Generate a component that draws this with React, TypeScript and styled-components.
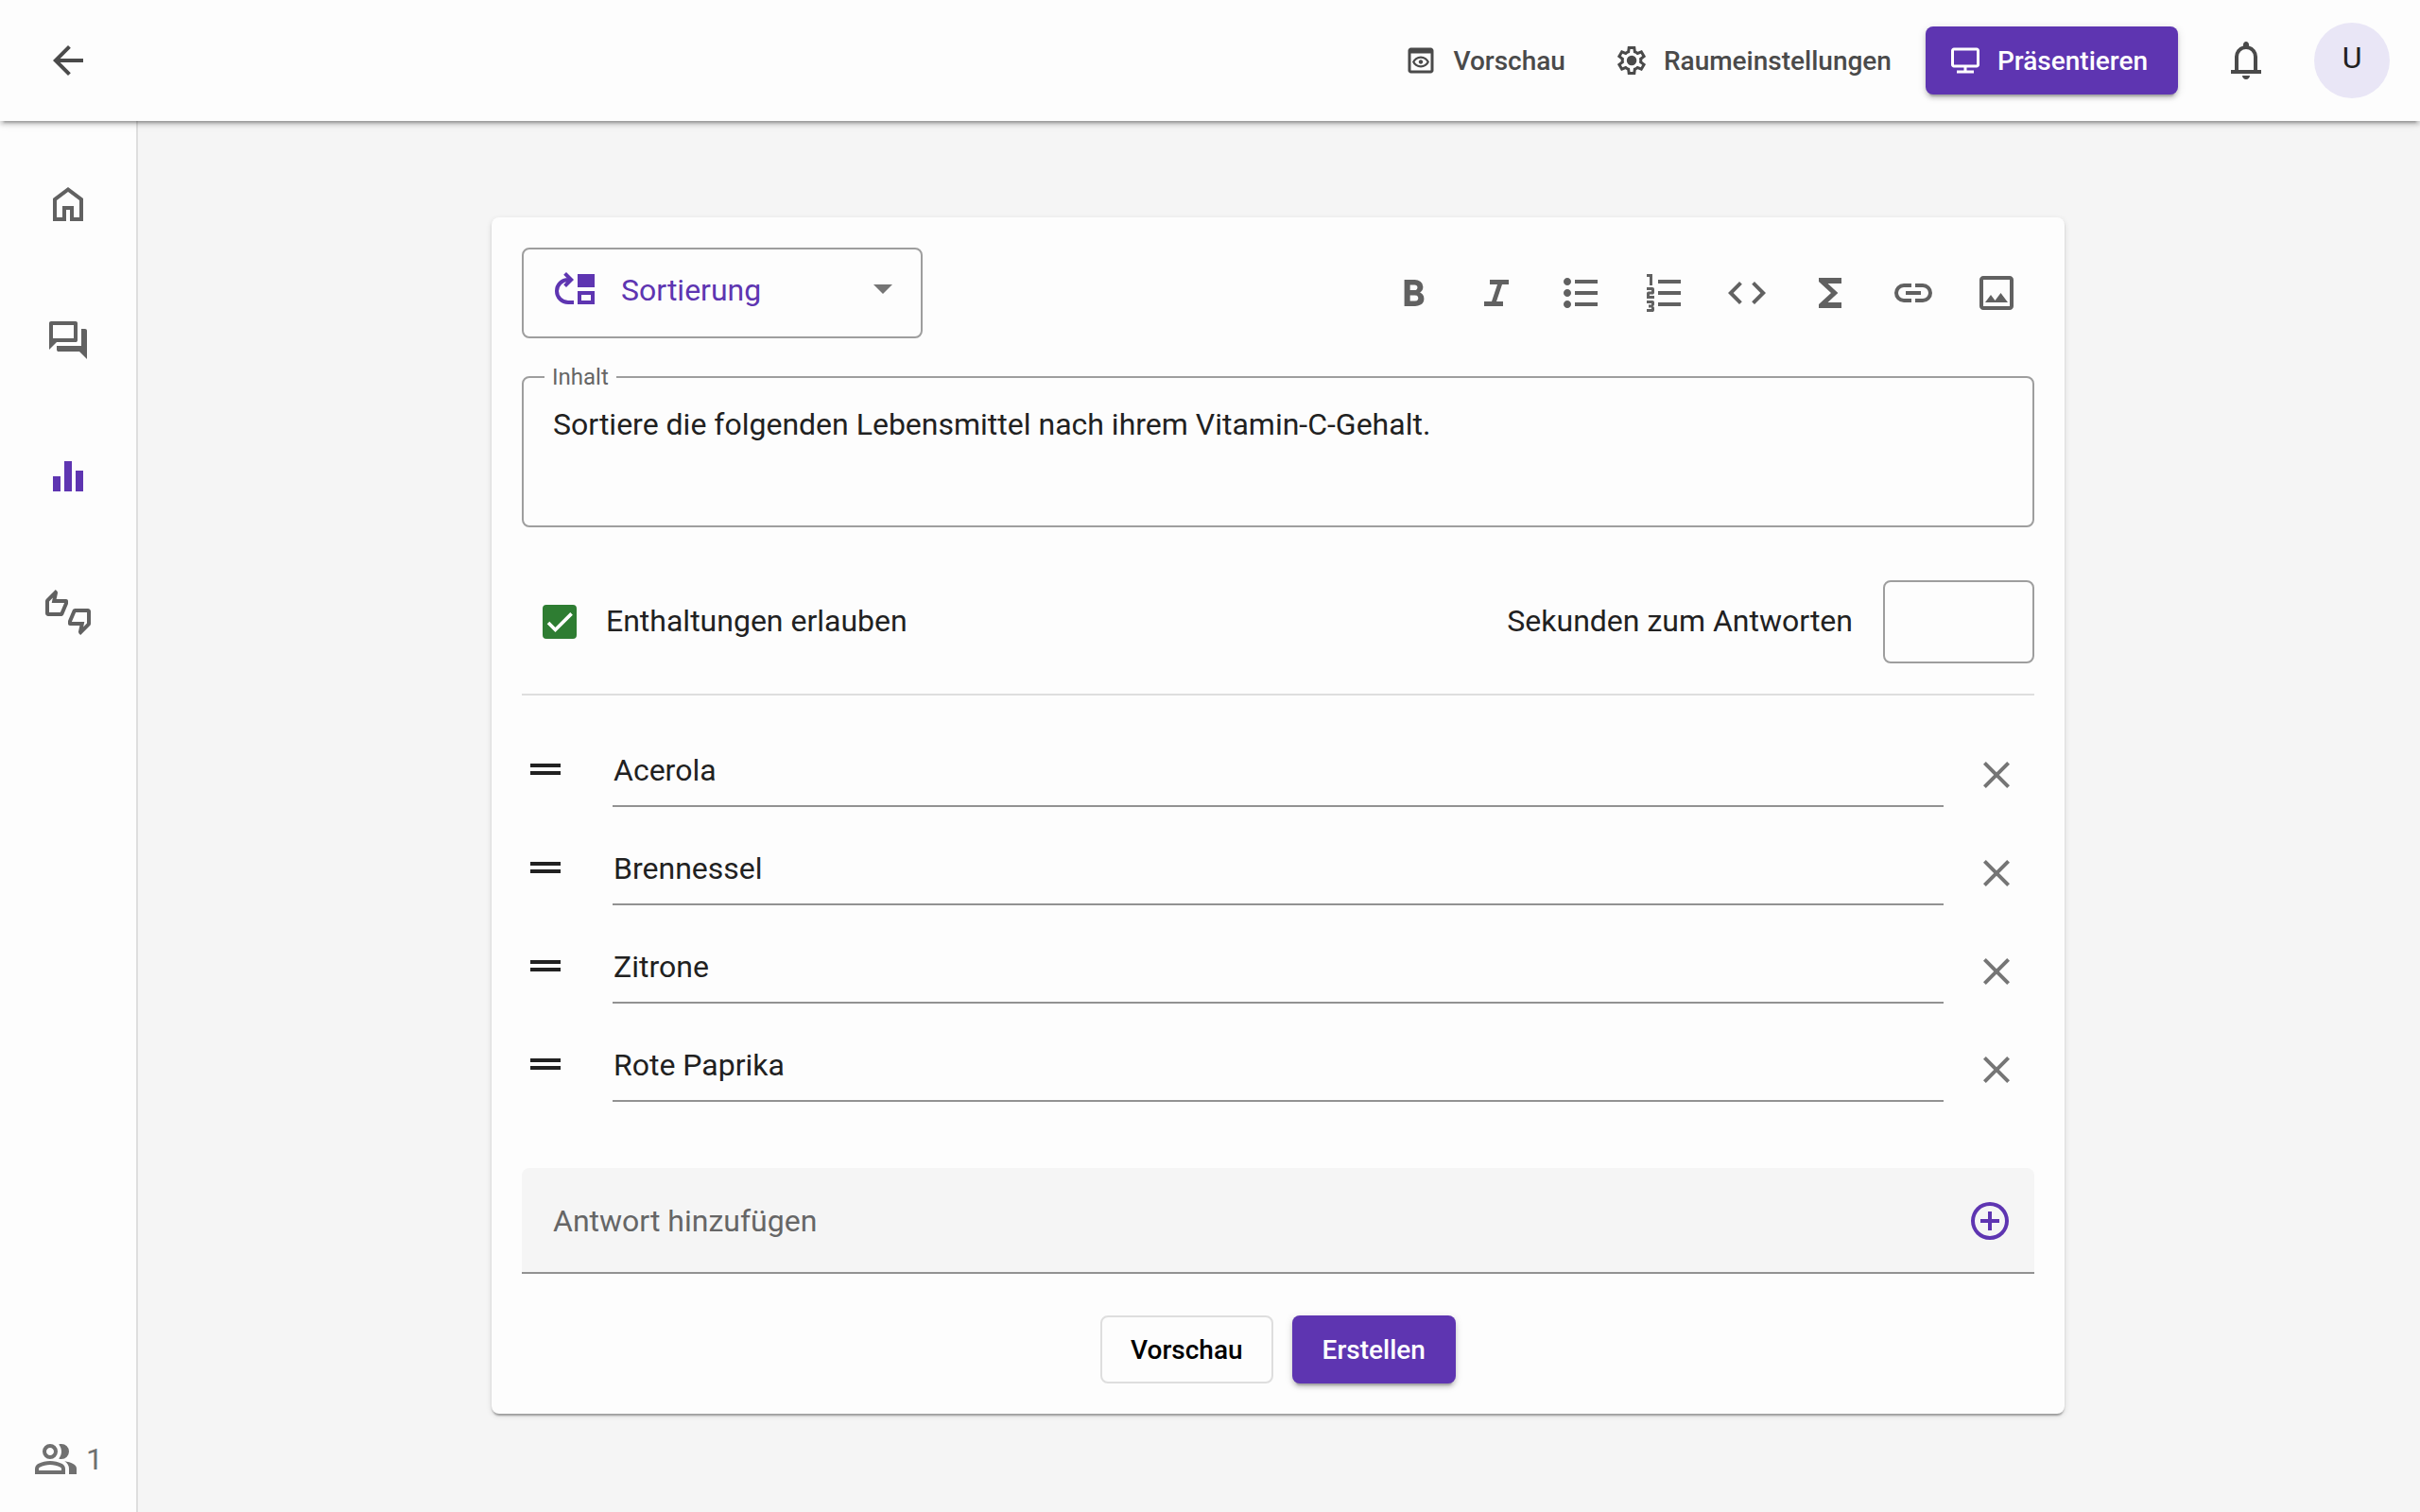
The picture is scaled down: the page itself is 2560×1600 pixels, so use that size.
import React, { useState } from 'react';
import styled, { createGlobalStyle } from 'styled-components';

const color = {
  primary: '#5e35b1',
  surface: '#fdfdfd',
  page: '#f5f5f5',
  text: '#212121',
  header: '#4a4a4a',
  icon: '#616161',
  hint: '#666666',
  close: '#757575',
  outline: '#9e9e9e',
  underline: '#929292',
  divider: '#dedede',
  success: '#2e7d32',
  avatar: '#e9e6f6',
};

const raised =
  '0 6px 2px -4px rgba(0,0,0,.2), 0 4px 4px 0 rgba(0,0,0,.14), 0 2px 10px 0 rgba(0,0,0,.12)';

const paths = {
  back: 'm313-440 224 224-57 56-320-320 320-320 57 56-224 224h487v80H313Z',
  preview:
    'M200-120q-33 0-56.5-23.5T120-200v-560q0-33 23.5-56.5T200-840h560q33 0 56.5 23.5T840-760v560q0 33-23.5 56.5T760-120H200Zm0-80h560v-480H200v480Zm280-80q-82 0-146.5-44.5T240-440q29-71 93.5-115.5T480-600q82 0 146.5 44.5T720-440q-29 71-93.5 115.5T480-280Zm0-60q56 0 102-26.5t72-73.5q-26-47-72-73.5T480-540q-56 0-102 26.5T306-440q26 47 72 73.5T480-340Zm0-40q25 0 42.5-17.5T540-440q0-25-17.5-42.5T480-500q-25 0-42.5 17.5T420-440q0 25 17.5 42.5T480-380Z',
  settings:
    'm370-80-16-128q-13-5-24.5-12T307-235l-119 50L78-375l103-78q-1-7-1-13.5v-27q0-6.5 1-13.5L78-585l110-190 119 50q11-8 23-15t24-12l16-128h220l16 128q13 5 24.5 12t22.5 15l119-50 110 190-103 78q1 7 1 13.5v27q0 6.5-2 13.5l103 78-110 190-118-50q-11 8-23 15t-24 12L590-80H370Zm70-80h79l14-106q31-8 57.5-23.5T639-327l99 41 39-68-86-65q5-14 7-29.5t2-31.5q0-16-2-31.5t-7-29.5l86-65-39-68-99 42q-22-23-48.5-38.5T533-694l-13-106h-79l-14 106q-31 8-57.5 23.5T321-633l-99-41-39 68 86 64q-5 15-7 30t-2 32q0 16 2 31t7 30l-86 65 39 68 99-42q22 23 48.5 38.5T427-266l13 106Zm42-180q58 0 99-41t41-99q0-58-41-99t-99-41q-59 0-99.5 41T342-480q0 58 40.5 99t99.5 41Z',
  present:
    'M240-120v-80h200v-80H160q-33 0-56.500-23.500T80-360v-400q0-33 23.500-56.500T160-840h640q33 0 56.500 23.500T880-760v400q0 33-23.500 56.500T800-280H520v80h200v80H240Zm-80-240h640v-400H160v400Z',
  bell: 'M160-200v-80h80v-280q0-83 50-147.500T420-792v-28q0-25 17.500-42.500T480-880q25 0 42.500 17.500T540-820v28q80 20 130 84.500T720-560v280h80v80H160Zm320 120q-33 0-56.500-23.500T400-160h160q0 33-23.500 56.500T480-80ZM320-280h320v-280q0-66-47-113t-113-47q-66 0-113 47t-47 113v280Z',
  home: 'M240-200h120v-240h240v240h120v-360L480-740 240-560v360Zm-80 80v-480l320-240 320 240v480H520v-240h-80v240H160Z',
  forum:
    'M280-240q-17 0-28.500-11.500T240-280v-80h520v-360h80q17 0 28.500 11.500T880-680v600L720-240H280ZM80-280v-560q0-17 11.500-28.500T120-880h520q17 0 28.500 11.500T680-840v360q0 17-11.500 28.500T640-440H240L80-280Zm520-240v-280H160v280h440Z',
  chart: 'M160-160v-320h160v320H160Zm240 0v-640h160v640H400Zm240 0v-440h160v440H640Z',
  group:
    'M40-160v-112q0-34 17.500-62.500T104-378q62-31 126-46.500T360-440q66 0 130 15.500T616-378q29 15 46.500 43.500T680-272v112H40Zm720 0v-120q0-44-24.500-84.500T666-434q51 6 96 20.500t84 35.500q36 20 55 44.500t19 53.500v120H760ZM360-480q-66 0-113-47t-47-113q0-66 47-113t113-47q66 0 113 47t47 113q0 66-47 113t-113 47Zm400-160q0 66-47 113t-113 47q-11 0-28-2.500t-28-5.500q27-32 41.500-71t14.500-81q0-42-14.500-81T544-792q14-5 28-6.500t28-1.500q66 0 113 47t47 113ZM120-240h480v-32q0-11-5.500-20T580-306q-54-27-109-40.500T360-360q-56 0-111 13.500T140-306q-9 5-14.500 14t-5.500 20v32Zm240-320q33 0 56.500-23.500T440-640q0-33-23.500-56.500T360-720q-33 0-56.500 23.500T280-640q0 33 23.500 56.500T360-560Z',
  bold: 'M272-200v-560h221q65 0 120 40t55 111q0 51-23 78.500T602-491q25 11 55.500 41t30.500 90q0 89-65 124.500T501-200H272Zm121-112h104q48 0 58.500-24.500T566-372q0-11-10.500-35.500T494-432H393v120Zm0-228h93q33 0 48-17t15-38q0-24-17-39t-44-15h-95v109Z',
  italic: 'M200-200v-100h160l120-360H320v-100h400v100H580L460-300h140v100H200Z',
  bullets:
    'M360-200v-80h480v80H360Zm0-240v-80h480v80H360Zm0-240v-80h480v80H360ZM200-160q-33 0-56.500-23.500T120-240q0-33 23.500-56.500T200-320q33 0 56.500 23.500T280-240q0 33-23.500 56.500T200-160Zm0-240q-33 0-56.500-23.500T120-480q0-33 23.500-56.500T200-560q33 0 56.500 23.500T280-480q0 33-23.500 56.500T200-400Zm0-240q-33 0-56.500-23.500T120-720q0-33 23.500-56.500T200-800q33 0 56.500 23.500T280-720q0 33-23.500 56.500T200-640Z',
  numbers:
    'M120-80v-60h100v-30h-60v-60h60v-30H120v-60h120q17 0 28.500 11.500T280-280v40q0 17-11.500 28.500T240-200q17 0 28.500 11.500T280-160v40q0 17-11.500 28.500T240-80H120Zm0-280v-110q0-17 11.500-28.500T160-510h60v-30H120v-60h120q17 0 28.500 11.500T280-560v70q0 17-11.500 28.500T240-450h-60v30h100v60H120Zm60-280v-180h-60v-60h120v240h-60Zm180 440v-80h480v80H360Zm0-240v-80h480v80H360Zm0-240v-80h480v80H360Z',
  code: 'M320-240 80-480l240-240 57 57-184 184 183 183-56 56Zm320 0-57-57 184-184-183-183 56-56 240 240-240 240Z',
  formula: 'M240-160v-80l260-240-260-240v-80h480v120H431l215 200-215 200h289v120H240Z',
  link: 'M440-280H280q-83 0-141.500-58.500T80-480q0-83 58.500-141.500T280-680h160v80H280q-50 0-85 35t-35 85q0 50 35 85t85 35h160v80ZM320-440v-80h320v80H320Zm200 160v-80h160q50 0 85-35t35-85q0-50-35-85t-85-35H520v-80h160q83 0 141.500 58.500T880-480q0 83-58.500 141.500T680-280H520Z',
  image:
    'M200-120q-33 0-56.500-23.500T120-200v-560q0-33 23.500-56.500T200-840h560q33 0 56.500 23.500T840-760v560q0 33-23.500 56.500T760-120H200Zm0-80h560v-560H200v560Zm40-80h480L570-480 450-320l-90-120-120 160Z',
  handle: 'M160-360v-80h640v80H160Zm0-160v-80h640v80H160Z',
  close:
    'm256-200-56-56 224-224-224-224 56-56 224 224 224-224 56 56-224 224 224 224-56 56-224-224-224 224Z',
  add: 'M440-280h80v-160h160v-80H520v-160h-80v160H280v80h160v160Zm40 200q-83 0-156-31.500T197-197q-54-54-85.500-127T80-480q0-83 31.500-156T197-763q54-54 127-85.500T480-880q83 0 156 31.500T763-763q54 54 85.500 127T880-480q0 83-31.500 156T763-197q-54 54-127 85.500T480-80Zm0-80q134 0 227-93t93-227q0-134-93-227t-227-93q-134 0-227 93t-93 227q0 134 93 227t227 93Z',
};

const thumbs =
  'M12 6c0-.55-.45-1-1-1H5.820l.66-3.180.02-.23c0-.31-.13-.59-.33-.8L5.380 0 .44 4.940C.17 5.210 0 5.590 0 6v6.500c0 .83.67 1.500 1.500 1.500h6.750c.62 0 1.150-.38 1.380-.91l2.260-5.290c.07-.17.11-.36.11-.55V6zm-2 1.130L7.920 12H2V6.210l1.930-1.930L3.360 7H10v.13zM22.500 10h-6.750c-.62 0-1.150.38-1.380.91l-2.260 5.290c-.07.17-.11.36-.11.55V18c0 .55.45 1 1 1h5.180l-.66 3.180-.02.24c0 .31.13.59.33.8l.79.78 4.940-4.940c.27-.27.44-.65.44-1.060v-6.500c0-.83-.67-1.500-1.500-1.500zm-.5 7.790l-1.930 1.930.57-2.720H14v-.13L16.080 12H22v5.790z';

const moveUp =
  'M11 18v2H8A7 7 0 0 1 8 6h-.8L5.600 4.400 7 3l4 4-4 4-1.400-1.400L7.200 8H8a5 5 0 0 0 0 10zM13 4h9v7h-9zM13 13v7h9v-7zm7 5h-5v-3h5z';

const Global = createGlobalStyle`
  *, *::before, *::after { box-sizing: border-box; }
  body {
    margin: 0;
    background: ${color.page};
    color: ${color.text};
    font: 400 32px/48px Roboto, "Open Sans", sans-serif;
  }
  button, input, select, textarea {
    margin: 0;
    padding: 0;
    border: 0;
    background: none;
    color: inherit;
    font: inherit;
    outline: none;
  }
  button, select { cursor: pointer; }
`;

const Svg = styled.svg<{ $size: number }>`
  display: block;
  flex: none;
  width: ${(p) => p.$size}px;
  height: ${(p) => p.$size}px;
  fill: currentColor;
`;

const Icon = ({ name, size = 48 }: { name: keyof typeof paths; size?: number }) => (
  <Svg $size={size} viewBox="0 -960 960 960" aria-hidden="true">
    <path d={paths[name]} />
  </Svg>
);

const Icon24 = ({ d }: { d: string }) => (
  <Svg $size={48} viewBox="0 0 24 24" aria-hidden="true">
    <path d={d} />
  </Svg>
);

const Page = styled.div`
  display: flex;
  flex-direction: column;
  min-height: 100vh;
`;

const Header = styled.header`
  position: relative;
  z-index: 2;
  display: flex;
  align-items: center;
  justify-content: space-between;
  height: 128px;
  padding: 0 32px;
  background: ${color.surface};
  color: ${color.header};
  box-shadow: ${raised};
`;

const HeaderActions = styled.div`
  display: flex;
  align-items: center;
  gap: 32px;
`;

const HeaderNav = styled.div`
  display: flex;
  align-items: center;
  gap: 4px;
`;

const IconButton = styled.button<{ $color?: string }>`
  display: grid;
  place-items: center;
  flex: none;
  width: 80px;
  height: 80px;
  color: ${(p) => p.$color ?? 'inherit'};
`;

const Button = styled.button<{ $kind: 'text' | 'outlined' | 'filled' }>`
  display: flex;
  align-items: center;
  justify-content: center;
  gap: 16px;
  height: 72px;
  padding: 0 ${(p) => (p.$kind === 'text' ? 24 : p.$kind === 'outlined' ? 30 : 32)}px;
  border: ${(p) => (p.$kind === 'outlined' ? `2px solid ${color.divider}` : '0')};
  border-radius: 8px;
  background: ${(p) => (p.$kind === 'filled' ? color.primary : 'transparent')};
  box-shadow: ${(p) => (p.$kind === 'filled' ? raised : 'none')};
  color: ${(p) => (p.$kind === 'filled' ? '#fff' : p.$kind === 'outlined' ? '#000' : 'inherit')};
  font-size: 28px;
  font-weight: 500;
  line-height: 37px;
  white-space: nowrap;
`;

const PresentButton = styled(Button)`
  margin-left: 8px;
  padding-left: 24px;
`;

const Avatar = styled.button`
  display: grid;
  place-items: center;
  width: 80px;
  height: 80px;
  padding-bottom: 6px;
  border-radius: 50%;
  background: ${color.avatar};
  color: ${color.text};
`;

const Body = styled.div`
  display: flex;
  flex: 1;
`;

const Sidebar = styled.nav`
  display: flex;
  flex: none;
  flex-direction: column;
  width: 144px;
  padding: 16px 0;
  background: ${color.surface};
  box-shadow: 2px 0 0 ${color.divider};
`;

const SidebarLink = styled.a<{ $active?: boolean }>`
  display: grid;
  place-items: center;
  height: 144px;
  color: ${(p) => (p.$active ? color.primary : color.icon)};
`;

const Participants = styled.div`
  display: flex;
  align-items: center;
  justify-content: center;
  gap: 8px;
  height: 80px;
  margin-top: auto;
  color: #707070;
`;

const Main = styled.main`
  flex: 1;
  padding: 102px 64px;
`;

const Card = styled.form`
  max-width: 1664px;
  margin: 0 auto;
  padding: 32px;
  border-radius: 8px;
  background: ${color.surface};
  box-shadow: 0 4px 2px -2px rgba(0, 0, 0, 0.2), 0 2px 2px 0 rgba(0, 0, 0, 0.14),
    0 2px 6px 0 rgba(0, 0, 0, 0.12);
`;

const CardTop = styled.div`
  display: flex;
  align-items: center;
  justify-content: space-between;
`;

const FormatPicker = styled.div`
  display: grid;
  grid-template-columns: 31px 48px 1fr 20px 30px;
  align-items: center;
  width: 424px;
  height: 96px;
  padding-bottom: 8px;
  border: 2px solid ${color.outline};
  border-radius: 8px;
  color: ${color.primary};

  > * {
    grid-row: 1;
  }
  > svg {
    pointer-events: none;
  }
  > svg:first-of-type {
    grid-column: 2;
  }
`;

const FormatSelect = styled.select`
  grid-column: 1 / -1;
  height: 84px;
  padding: 2px 0 0 103px;
  appearance: none;
`;

const Caret = styled.svg`
  grid-column: 4;
  width: 20px;
  height: 10px;
  fill: ${color.close};
`;

const Toolbar = styled.div`
  display: flex;
  gap: 8px;
`;

const ContentField = styled.fieldset`
  min-width: 0;
  margin: 28px 0 0;
  padding: 0 22px;
  border: 2px solid ${color.outline};
  border-radius: 8px;
`;

const ContentLabel = styled.legend`
  padding: 0 8px;
  color: ${color.hint};
  font-size: 24px;
  line-height: 26px;
`;

const ContentText = styled.textarea`
  display: block;
  width: 100%;
  height: 144px;
  padding: 13px 9px 0;
  resize: none;
`;

const Options = styled.div`
  display: flex;
  align-items: center;
  justify-content: space-between;
  margin-top: 56px;
  padding-bottom: 32px;
  border-bottom: 2px solid ${color.divider};
`;

const OptionLabel = styled.label`
  display: flex;
  align-items: center;
  gap: 32px;
`;

const AbstentionLabel = styled(OptionLabel)`
  gap: 31px;
  padding-left: 22px;
`;

const OptionText = styled.span`
  padding-bottom: 2px;
`;

const CheckStack = styled.span`
  display: grid;
  place-items: center;

  > * {
    grid-area: 1 / 1;
  }
`;

const CheckInput = styled.input`
  width: 36px;
  height: 36px;
  border-radius: 4px;
  appearance: none;
  border: 4px solid ${color.icon};

  &:checked {
    border-color: ${color.success};
    background: ${color.success};
  }
`;

const CheckMark = styled.svg`
  width: 28px;
  height: 28px;
  fill: none;
  stroke: #fff;
  stroke-width: 3.12;
  pointer-events: none;
`;

const SecondsInput = styled.input`
  width: 160px;
  height: 88px;
  padding: 0 32px;
  border: 2px solid ${color.outline};
  border-radius: 8px;
`;

const Answers = styled.ul`
  margin: 26px 0 0;
  padding: 0;
  list-style: none;
`;

const Answer = styled.li`
  display: flex;
  align-items: center;
  gap: 16px;
  height: 104px;
`;

const DragHandle = styled.button`
  display: grid;
  align-items: center;
  width: 80px;
  height: 80px;
  padding-left: 1px;
  cursor: grab;
`;

const AnswerInput = styled.input`
  flex: 1;
  min-width: 0;
  height: 80px;
  padding: 4px 1px 0;
  border-bottom: 2px solid ${color.underline};
`;

const RemoveButton = styled(IconButton)`
  height: 92px;
  padding-top: 12px;
`;

const AddAnswer = styled.div`
  display: flex;
  align-items: center;
  height: 112px;
  margin-top: 58px;
  padding: 2px 7px 0 33px;
  border-bottom: 2px solid ${color.underline};
  border-radius: 8px 8px 0 0;
  background: ${color.page};
`;

const AddInput = styled.input`
  flex: 1;
  min-width: 0;
  height: 100%;

  &::placeholder {
    color: ${color.hint};
    opacity: 1;
  }
`;

const Footer = styled.div`
  display: flex;
  justify-content: center;
  gap: 20px;
  margin-top: 44px;
`;

const tools: { name: keyof typeof paths; label: string }[] = [
  { name: 'bold', label: 'Fett' },
  { name: 'italic', label: 'Kursiv' },
  { name: 'bullets', label: 'Liste' },
  { name: 'numbers', label: 'Nummerierte Liste' },
  { name: 'code', label: 'Code' },
  { name: 'formula', label: 'Formel' },
  { name: 'link', label: 'Link' },
  { name: 'image', label: 'Bild' },
];

export default function App() {
  const [answers, setAnswers] = useState(['Acerola', 'Brennessel', 'Zitrone', 'Rote Paprika']);
  const [draft, setDraft] = useState('');

  const change = (index: number, value: string) =>
    setAnswers(answers.map((a, i) => (i === index ? value : a)));
  const remove = (index: number) => setAnswers(answers.filter((_, i) => i !== index));
  const add = () => {
    if (!draft.trim()) return;
    setAnswers([...answers, draft.trim()]);
    setDraft('');
  };

  return (
    <Page>
      <Global />
      <Header>
        <IconButton aria-label="Zurück">
          <Icon name="back" />
        </IconButton>
        <HeaderActions>
          <HeaderNav>
            <Button $kind="text">
              <Icon name="preview" size={36} />
              Vorschau
            </Button>
            <Button $kind="text">
              <Icon name="settings" size={36} />
              Raumeinstellungen
            </Button>
            <PresentButton $kind="filled">
              <Icon name="present" size={36} />
              Präsentieren
            </PresentButton>
          </HeaderNav>
          <IconButton aria-label="Benachrichtigungen">
            <Icon name="bell" />
          </IconButton>
          <Avatar aria-label="Benutzerkonto">U</Avatar>
        </HeaderActions>
      </Header>
      <Body>
        <Sidebar>
          <SidebarLink href="#home" aria-label="Übersicht">
            <Icon name="home" />
          </SidebarLink>
          <SidebarLink href="#comments" aria-label="Fragen und Antworten">
            <Icon name="forum" />
          </SidebarLink>
          <SidebarLink href="#series" aria-label="Umfragen" $active>
            <Icon name="chart" />
          </SidebarLink>
          <SidebarLink href="#feedback" aria-label="Live-Feedback">
            <Icon24 d={thumbs} />
          </SidebarLink>
          <Participants>
            <Icon name="group" />
            <span>1</span>
          </Participants>
        </Sidebar>
        <Main>
          <Card onSubmit={(e) => e.preventDefault()}>
            <CardTop>
              <FormatPicker>
                <FormatSelect aria-label="Format">
                  <option>Sortierung</option>
                </FormatSelect>
                <Icon24 d={moveUp} />
                <Caret viewBox="0 0 20 10" aria-hidden="true">
                  <path d="M0 0h20L10 10z" />
                </Caret>
              </FormatPicker>
              <Toolbar>
                {tools.map((t) => (
                  <IconButton key={t.name} type="button" aria-label={t.label} $color={color.icon}>
                    <Icon name={t.name} />
                  </IconButton>
                ))}
              </Toolbar>
            </CardTop>
            <ContentField>
              <ContentLabel>
                <label htmlFor="content">Inhalt</label>
              </ContentLabel>
              <ContentText
                id="content"
                defaultValue="Sortiere die folgenden Lebensmittel nach ihrem Vitamin-C-Gehalt."
              />
            </ContentField>
            <Options>
              <AbstentionLabel>
                <CheckStack>
                  <CheckInput type="checkbox" defaultChecked />
                  <CheckMark viewBox="0 0 24 24" aria-hidden="true">
                    <path d="M1.730 12.910 8.100 19.280 22.790 4.590" />
                  </CheckMark>
                </CheckStack>
                <OptionText>Enthaltungen erlauben</OptionText>
              </AbstentionLabel>
              <OptionLabel>
                <OptionText>Sekunden zum Antworten</OptionText>
                <SecondsInput inputMode="numeric" />
              </OptionLabel>
            </Options>
            <Answers>
              {answers.map((answer, i) => (
                <Answer key={i}>
                  <DragHandle type="button" aria-label="Verschieben">
                    <Icon name="handle" />
                  </DragHandle>
                  <AnswerInput
                    aria-label={`Antwort ${i + 1}`}
                    value={answer}
                    onChange={(e) => change(i, e.target.value)}
                  />
                  <RemoveButton
                    type="button"
                    aria-label="Antwort entfernen"
                    $color={color.close}
                    onClick={() => remove(i)}
                  >
                    <Icon name="close" />
                  </RemoveButton>
                </Answer>
              ))}
            </Answers>
            <AddAnswer>
              <AddInput
                aria-label="Antwort hinzufügen"
                placeholder="Antwort hinzufügen"
                value={draft}
                onChange={(e) => setDraft(e.target.value)}
              />
              <IconButton
                type="button"
                aria-label="Hinzufügen"
                $color={color.primary}
                onClick={add}
              >
                <Icon name="add" />
              </IconButton>
            </AddAnswer>
            <Footer>
              <Button type="button" $kind="outlined">
                Vorschau
              </Button>
              <Button type="submit" $kind="filled">
                Erstellen
              </Button>
            </Footer>
          </Card>
        </Main>
      </Body>
    </Page>
  );
}
